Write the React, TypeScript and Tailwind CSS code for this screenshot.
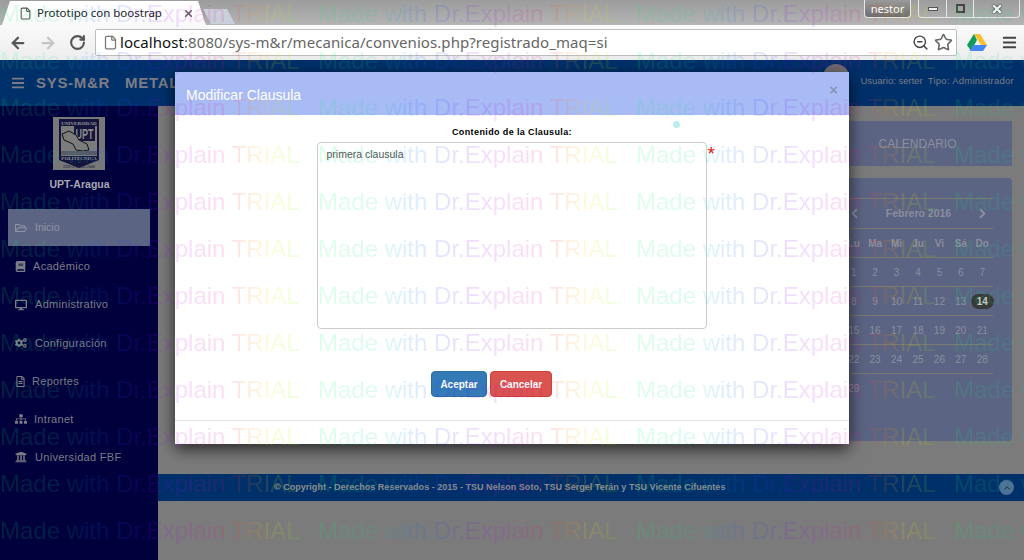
import { ArrowLeft, ArrowRight, ChevronLeft, ChevronRight, ChevronUp, File, RotateCw, Star, X, ZoomOut } from 'lucide-react'
import { FaBars, FaBook, FaCogs, FaDesktop, FaRegFileAlt, FaRegFolderOpen, FaSitemap, FaUniversity } from 'react-icons/fa'
import type { ReactNode } from 'react'

const menu: { label: string; icon: ReactNode; cls: string }[] = [
  { label: 'Académico', icon: <FaBook size={11} />, cls: 'h-[38px] gap-[7px] tracking-[0.3px]' },
  { label: 'Administrativo', icon: <FaDesktop size={12} />, cls: 'h-[39px] gap-[8px] tracking-[0.3px]' },
  { label: 'Configuración', icon: <FaCogs size={12} />, cls: 'h-[38px] gap-[8px] tracking-[0.3px]' },
  { label: 'Reportes', icon: <FaRegFileAlt size={11} />, cls: 'h-[38px] gap-[6px] tracking-[0.3px]' },
  { label: 'Intranet', icon: <FaSitemap size={12} />, cls: 'h-[38px] gap-[7px] tracking-[0.3px]' },
  { label: 'Universidad FBF', icon: <FaUniversity size={12} />, cls: 'h-[38px] gap-[8px] tracking-[0.3px]' },
]

const weeks = [
  ['Lu', 'Ma', 'Mi', 'Ju', 'Vi', 'Sá', 'Do'],
  ['1', '2', '3', '4', '5', '6', '7'],
  ['8', '9', '10', '11', '12', '13', '14'],
  ['15', '16', '17', '18', '19', '20', '21'],
  ['22', '23', '24', '25', '26', '27', '28'],
  ['29', '', '', '', '', '', ''],
]

function Watermark() {
  const rows = Array.from({ length: 12 })
  const cols = Array.from({ length: 4 })
  return (
    <div className="absolute inset-0 z-50 overflow-hidden pointer-events-none select-none -mt-[10px]">
      {rows.map((_, r) => (
        <div key={r} className="flex h-[47px] items-center">
          {cols.map((_, c) => (
            <div key={c} className="w-[318px] shrink-0 whitespace-nowrap">
              <span className="inline-block text-[24px] leading-[47px] text-transparent bg-clip-text bg-[linear-gradient(90deg,rgba(0,255,102,.13)_0%,rgba(0,210,170,.13)_22%,rgba(0,120,255,.13)_30%,rgba(40,60,255,.13)_42%,rgba(120,0,255,.13)_50%,rgba(200,0,230,.13)_62%,rgba(255,0,110,.13)_76%,rgba(255,110,0,.13)_82%,rgba(255,230,0,.13)_90%,rgba(100,255,0,.13)_100%)]">
                Made with Dr.Explain TRIAL
              </span>
            </div>
          ))}
        </div>
      ))}
    </div>
  )
}

function BrowserChrome() {
  return (
    <div className="shrink-0 font-['Noto_Sans',sans-serif]">
      {/* tabs */}
      <div className="h-[25px] flex items-end justify-between bg-[linear-gradient(180deg,#9c9c9c,#b4b4b4)]">
        <div className="flex items-end pl-[2px]">
          <div className="w-[204px] h-[24px] pl-[17px] pr-[12px] flex items-center gap-[5px] bg-[linear-gradient(180deg,#ffffff,#fafafa)] [clip-path:polygon(0_100%,8px_0,calc(100%-8px)_0,100%_100%)]">
            <File size={13} className="text-[#555] shrink-0" />
            <span className="text-[11.5px] text-[#222] whitespace-nowrap">Prototipo con boostrap</span>
            <X size={11} strokeWidth={3} className="ml-auto text-[#555]" />
          </div>
          <div className="w-[32px] h-[15px] mb-[1px] -ml-[3px] bg-[#c9d0da] [clip-path:polygon(0_0,24px_0,100%_100%,8px_100%)]" />
        </div>
        <div className="self-start flex items-start pr-[4px]">
          <div className="w-[47px] h-[18px] mr-[7px] rounded-b-[4px] border border-t-0 border-[#e8e8e8] bg-[linear-gradient(180deg,#9a9a9a,#6e6e6e)] text-[11px] leading-[17px] text-white text-center">nestor</div>
          <div className="w-[102px] h-[18px] flex rounded-b-[4px] border border-t-0 border-[#e8e8e8] text-[#333]">
            <div className="w-[28px] flex items-center justify-center border-r border-[#e8e8e8]"><div className="w-[10px] h-[4px] bg-[#eee] border border-[#555]" /></div>
            <div className="w-[27px] flex items-center justify-center border-r border-[#e8e8e8]"><div className="w-[9px] h-[9px] bg-transparent border-2 border-[#444]" /></div>
            <div className="flex-1 flex items-center justify-center"><X size={12} strokeWidth={4} className="text-white drop-shadow-[0_0_1px_#222]" /></div>
          </div>
        </div>
      </div>
      {/* toolbar */}
      <div className="h-[35px] flex items-center bg-[linear-gradient(180deg,#fafafa,#ececec)]">
        <div className="flex items-center gap-[12px] pl-[9px] w-[95px]">
          <ArrowLeft size={18} strokeWidth={3} className="text-[#555]" />
          <ArrowRight size={18} strokeWidth={3} className="text-[#c4c4c4]" />
          <RotateCw size={17} strokeWidth={3} className="text-[#555]" />
        </div>
        <div className="w-[862px] h-[27px] flex items-center bg-white border border-[#bdbdbd] rounded-[2px] pl-[7px] pr-[3px]">
          <File size={15} className="text-[#777] shrink-0" />
          <span className="ml-[2px] text-[15px] tracking-[0.07px] text-[#666] whitespace-nowrap"><span className="text-[#111]">localhost</span>:8080/sys-m&amp;r/mecanica/convenios.php?registrado_maq=si</span>
          <ZoomOut size={17} className="ml-auto text-[#444]" />
          <Star size={19} className="ml-[5px] text-[#666]" />
        </div>
        <svg width="20" height="18" viewBox="0 0 20 18" className="ml-[10px]">
          <polygon points="7,0 13,0 20,11 14,11" fill="#fbc02d" />
          <polygon points="7,0 10,6 4,17 0,11" fill="#0f9d58" />
          <polygon points="6,11 20,11 16,17 3,17" fill="#4285f4" />
        </svg>
        <FaBars size={15} className="ml-[15px] text-[#444]" />
      </div>
    </div>
  )
}

function Logo() {
  return (
    <svg width="52" height="53" viewBox="0 0 52 53" className="block">
      <rect width="52" height="53" fill="#787878" />
      <path d="M6 2h40v41l-20 8-20-8z" fill="#14143c" />
      <path d="M8 9h36v33H8z" fill="#7c7c7c" />
      <text x="26" y="7.5" textAnchor="middle" fontSize="5" fontWeight="bold" fontFamily="Liberation Serif, serif" fill="#9a9a9a">UNIVERSIDAD</text>
      <rect x="21" y="9" width="21" height="15" fill="#14143c" />
      <text x="31.5" y="22" textAnchor="middle" fontSize="15" fontWeight="bold" fontFamily="Liberation Sans, sans-serif" fill="#8a8a8a" textLength="18" lengthAdjust="spacingAndGlyphs">UPT</text>
      <path d="M9 17l7-3 7 4 3 5 8 4 2 6-6 1-7-1-3-6-9-4z" fill="#7c7c7c" stroke="#111" strokeWidth="1" />
      <rect x="8" y="34" width="36" height="4" fill="#5a5a62" />
      <rect x="8" y="39" width="36" height="5" fill="#14143c" />
      <text x="26" y="43" textAnchor="middle" fontSize="5" fontWeight="bold" fontFamily="Liberation Serif, serif" fill="#9a9a9a">POLITÉCNICA</text>
      <text x="26" y="51" textAnchor="middle" fontSize="4" fontFamily="Liberation Serif, serif" fill="#14143c">EDICPN   8.03.2008</text>
    </svg>
  )
}

function Sidebar() {
  return (
    <aside className="w-[158px] shrink-0 bg-[#00003c] pt-[11px] text-[#7c7c84] text-[11px]">
      <div className="flex justify-center"><Logo /></div>
      <div className="mt-[7px] h-[15px] text-center font-bold text-[10.5px] leading-[15px] text-[#a8a8b0] ml-[1px]">UPT-Aragua</div>
      <div className="mt-[17px] ml-[8px] w-[142px] h-[37px] bg-[#5c6484] flex items-center gap-[8px] pl-[7px] text-[#8f93a3] text-[10.5px]">
        <FaRegFolderOpen size={12} />
        <span>Inicio</span>
      </div>
      <nav className="mt-[1px]">
        {menu.map(m => (
          <div key={m.label} className={`flex items-center pl-[15px] ${m.cls}`}>
            {m.icon}
            <span>{m.label}</span>
          </div>
        ))}
      </nav>
    </aside>
  )
}

function Calendar() {
  return (
    <div className="w-[204px]">
      <div className="h-[45px] bg-[#5c6484] flex items-center justify-center text-[12px] text-[#8b8e9c] pl-[15px]">CALENDARIO</div>
      <div className="mt-[12px] h-[263px] rounded-[4px] bg-[#5c6484] pt-[20px] pl-[35px] pr-[19px] text-[#8b8e9c]">
        <div className="h-[30px] flex items-center justify-between border-t border-[#7a7a6e] pl-[4px] pr-[3px]">
          <ChevronLeft size={15} strokeWidth={3} />
          <span className="text-[10.5px] font-bold">Febrero 2016</span>
          <ChevronRight size={15} strokeWidth={3} />
        </div>
        {weeks.map((w, i) => (
          <div key={i} className={`h-[29px] grid grid-cols-7 items-center text-center text-[10px] border-t border-[#7a7a6e] ${i === 0 ? 'font-bold' : ''}`}>
            {w.map((d, j) => (
              <span key={j} className={d === '14' ? '-mx-[0.5px] rounded-[8px] bg-[#3a3a3a] text-[#c8c8c8] font-bold' : ''}>{d}</span>
            ))}
          </div>
        ))}
      </div>
    </div>
  )
}

function Modal() {
  return (
    <div className="absolute left-[175px] top-[72px] w-[674px] h-[372px] z-10 flex flex-col bg-white shadow-[0_5px_15px_rgba(0,0,0,.7)]">
      <div className="h-[43px] shrink-0 bg-[#a9bbf5] flex items-center justify-between pl-[11px] pr-[11px]">
        <span className="text-[14px] text-white mt-[4px]">Modificar Clausula</span>
        <span className="text-[15px] font-bold text-[#8a94b4] -mt-[6px]">×</span>
      </div>
      <div className="flex-1 flex flex-col items-center relative">
        <div className="mt-[11px] h-[13px] text-[9px] leading-[13px] font-bold text-black tracking-[0.38px]">Contenido de la Clausula:</div>
        <div className="mt-[3px] flex items-start ml-[10px]">
          <div className="w-[390px] h-[187px] border border-[#ccc] rounded-[4px] px-[9px] py-[4px] text-[10.5px] leading-[15px] text-[#555]">primera clausula</div>
          <span className="ml-[1px] text-[19px] leading-[16px] text-[#e01010] w-[10px] pt-[4px]">*</span>
        </div>
        <div className="mt-[42px] flex gap-[3px] text-[10px] font-bold text-white -ml-[41px]">
          <div className="w-[56px] h-[26px] rounded-[4px] bg-[#337ab7] border border-[#2e6da4] flex items-center justify-center">Aceptar</div>
          <div className="w-[62px] h-[26px] rounded-[4px] bg-[#d9534f] border border-[#d43f3a] flex items-center justify-center">Cancelar</div>
        </div>
        <div className="mt-[23px] w-full border-t border-[#e5e5e5]" />
        <div className="absolute left-[498px] top-[6px] w-[7px] h-[7px] rounded-full bg-[#bdeeee]" />
      </div>
    </div>
  )
}

export default function App() {
  return (
    <div className="relative w-[1024px] h-[560px] overflow-hidden flex flex-col font-['Liberation_Sans',sans-serif]">
      <BrowserChrome />
      <div className="relative flex-1 flex flex-col bg-[#7b7b7b] min-h-0">
        {/* navbar */}
        <header className="h-[46px] shrink-0 bg-[#00306a] flex items-center pl-[11px] pr-[10px] text-[#7c7c84]">
          <FaBars size={14} />
          <span className="ml-[11px] text-[15px] font-bold tracking-[0.7px] whitespace-nowrap">SYS-M&amp;R</span>
          <span className="ml-[15px] text-[15px] font-bold tracking-[0.7px]">METAL</span>
          <div className="ml-auto flex items-center text-[9.5px] -mt-[3px]">
            <div className="w-[26px] h-[26px] rounded-full bg-[#6f6f6f] mr-[11px] -mt-[10px]" />
            <span>Usuario: serter</span>
            <span className="ml-[5px] tracking-[0.25px]">Tipo: Administrador</span>
          </div>
        </header>
        <div className="flex-1 flex min-h-0">
          <Sidebar />
          <main className="flex-1 flex flex-col min-w-0">
            <div className="h-[368px] shrink-0 flex justify-end pt-[15px] pr-[12px]">
              <Calendar />
            </div>
            <footer className="h-[27px] shrink-0 bg-[#00306a] flex items-center pl-[116px] pr-[10px] text-[9px] font-bold tracking-[0.03px] text-[#8c8c8c]">
              <span className="whitespace-nowrap">© Copyright - Derechos Reservados - 2015 - TSU Nelson Soto, TSU Sergel Terán y TSU Vicente Cifuentes</span>
              <div className="ml-auto w-[15px] h-[15px] rounded-full bg-[#4f6f96] flex items-center justify-center">
                <ChevronUp size={10} className="text-[#222]" />
              </div>
            </footer>
          </main>
        </div>
        <div className="absolute inset-0 pointer-events-none -mt-[60px]"><Modal /></div>
      </div>
      <Watermark />
    </div>
  )
}
